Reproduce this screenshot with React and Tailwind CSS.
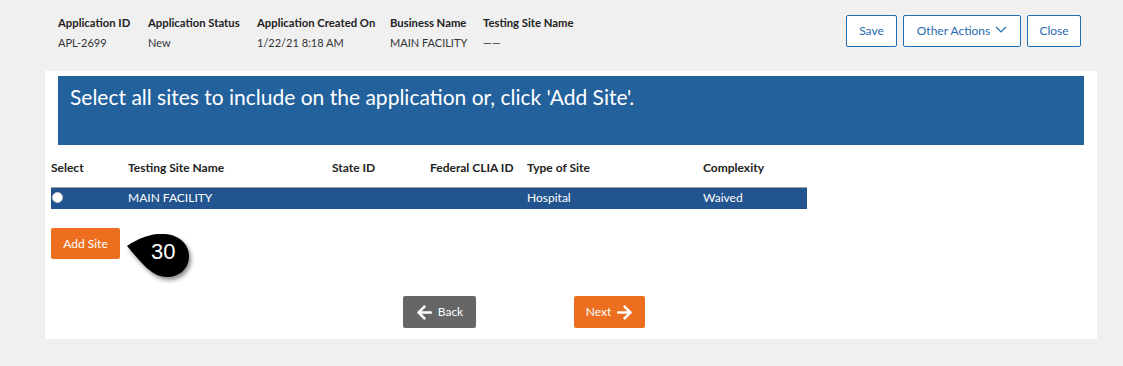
import { FaArrowLeft, FaArrowRight } from "react-icons/fa";

const font = { fontFamily: "Lato, 'Open Sans', sans-serif" };

const meta = [
  { label: "Application ID", value: "APL-2699", w: "w-[90px]" },
  { label: "Application Status", value: "New", w: "w-[109px]" },
  { label: "Application Created On", value: "1/22/21 8:18 AM", w: "w-[133px]" },
  { label: "Business Name", value: "MAIN FACILITY", w: "w-[93px]" },
  { label: "Testing Site Name", value: "——", w: "w-[110px]" },
];

const Callout = () => (
  <div className="absolute left-[76px] top-[6px] w-[70px] h-[50px]">
    <svg width="70" height="50" viewBox="0 0 70 50" className="absolute left-0 top-0">
      <defs>
        <filter id="sh" x="-30%" y="-30%" width="160%" height="160%">
          <feDropShadow dx="2" dy="3" stdDeviation="2" floodColor="#000" floodOpacity="0.45" />
        </filter>
      </defs>
      <path
        d="M0 12 C 12 4, 26 -1, 38 0 C 52 1, 62 10, 62 22 C 62 35, 52 43, 40 43 C 26 43, 17 32, 0 12 Z"
        fill="#000"
        filter="url(#sh)"
      />
    </svg>
    <span
      className="absolute left-[24px] top-[7px] text-white text-[22px] leading-none"
      style={{ fontFamily: "'Liberation Sans', Arial, sans-serif" }}
    >
      30
    </span>
  </div>
);

export default function App() {
  return (
    <div className="min-h-[366px] bg-[#f0f0f0] text-[#222]" style={font}>
      <div className="flex items-start justify-between pl-[58px] pr-[42px] pt-[15px] h-[71px]">
        <div className="flex">
          {meta.map((m) => (
            <div key={m.label} className={m.w}>
              <div className="font-bold leading-[15px] text-[11.3px] whitespace-nowrap">{m.label}</div>
              <div className="leading-[15px] mt-[5px] text-[11px] text-[#333]">{m.value}</div>
            </div>
          ))}
        </div>
        <div className="flex gap-[6px] text-[12px] text-[#1f6cb0]">
          <button className="h-[32px] w-[51px] bg-white border border-[#1f6cb0] rounded-[2px]">Save</button>
          <button className="h-[32px] w-[118px] bg-white border border-[#1f6cb0] rounded-[2px] flex items-center justify-center gap-[5px]">
            Other Actions
            <svg width="12" height="8" viewBox="0 0 12 8" className="mb-[2px]">
              <path d="M1 1 L6 6 L11 1" stroke="#1f6cb0" strokeWidth="1.2" fill="none" />
            </svg>
          </button>
          <button className="h-[32px] w-[54px] bg-white border border-[#1f6cb0] rounded-[2px]">Close</button>
        </div>
      </div>

      <div className="ml-[45px] mr-[26px] h-[268px] bg-white pt-[5px] pl-[6px]">
        <div className="ml-[7px] mr-[13px] h-[69px] bg-[#23619d] pl-[12px] pt-[7px]">
          <h1 className="text-white text-[21px] leading-[28px]">
            Select all sites to include on the application or, click 'Add Site'.
          </h1>
        </div>

        <div className="w-[756px] mt-[13px]">
          <div className="flex text-[12px] font-bold h-[29px] items-start pt-[1px]">
            <div className="w-[77px]">Select</div>
            <div className="w-[204px]">Testing Site Name</div>
            <div className="w-[98px]">State ID</div>
            <div className="w-[97px]">Federal CLIA ID</div>
            <div className="w-[176px]">Type of Site</div>
            <div>Complexity</div>
          </div>
          <div className="flex items-center h-[22px] bg-[#22548f] border-t border-[#a0a0a0] text-white text-[12px] pb-[2px]">
            <div className="w-[77px] flex items-center pl-[1px]">
              <span className="w-[11px] h-[11px] rounded-full bg-white border border-[#ccc] mb-[1px]" />
            </div>
            <div className="w-[204px]">MAIN FACILITY</div>
            <div className="w-[98px]" />
            <div className="w-[97px]" />
            <div className="w-[176px]">Hospital</div>
            <div>Waived</div>
          </div>
        </div>

        <div className="relative mt-[19px] h-[31px]">
          <button className="h-[31px] w-[69px] bg-[#ec6e1f] text-white text-[12px] rounded-[2px]">Add Site</button>
          <Callout />
        </div>

        <div className="flex ml-[352px] mt-[37px] gap-[98px]">
          <button className="h-[32px] w-[73px] bg-[#666666] text-white text-[12px] rounded-[2px] flex items-center justify-center gap-[5px]">
            <FaArrowLeft className="text-[17px]" />
            Back
          </button>
          <button className="h-[32px] w-[71px] bg-[#ec6e1f] text-white text-[12px] rounded-[2px] flex items-center justify-center gap-[5px]">
            Next
            <FaArrowRight className="text-[17px]" />
          </button>
        </div>
      </div>
    </div>
  );
}
